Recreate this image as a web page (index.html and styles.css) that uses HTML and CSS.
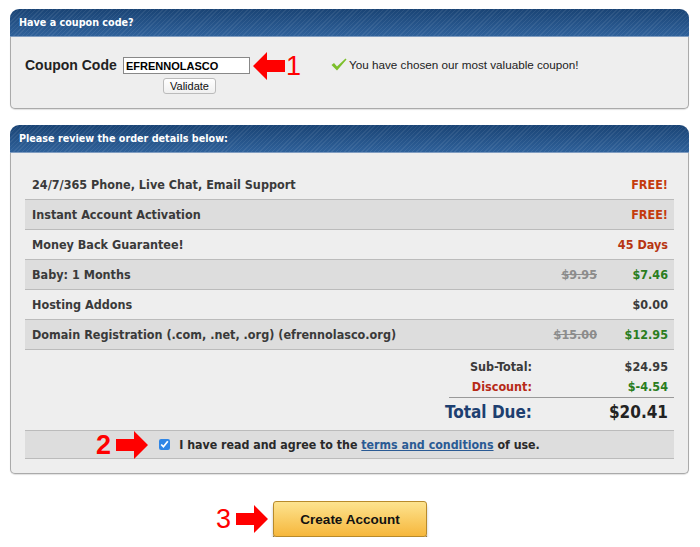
FILE: index.html
```html
<!DOCTYPE html>
<html lang="en">
<head>
    <meta charset="UTF-8">
    <title>Order review</title>
    <link rel="stylesheet" href="styles.css">
</head>
<body>
    <div class="page">
        <div class="panel">
            <div class="panel-head">Have a coupon code?</div>
            <div class="panel-body coupon-body">
                <label class="coupon-label" for="coupon">Coupon Code</label>
                <div class="coupon-field">
                    <input type="text" id="coupon" value="EFRENNOLASCO">
                    <button type="button" class="validate">Validate</button>
                </div>
                <span class="mark mark-left">
                    <svg width="32" height="28" viewBox="0 0 32 28"><path d="M0 14 L14 0 L14 8 L32 8 L32 20 L14 20 L14 28 Z" fill="#f00"/></svg>
                    <span class="mark-num">1</span>
                </span>
                <div class="coupon-msg">
                    <svg width="16" height="13" viewBox="0 0 16 13"><path d="M0.5 7 L3 5 L6 8.5 L14.5 0.5 L15.5 1.5 L6 12.5 Z" fill="#7cbf2a"/></svg>
                    You have chosen our most valuable coupon!
                </div>
            </div>
        </div>

        <div class="panel">
            <div class="panel-head">Please review the order details below:</div>
            <div class="panel-body order-body">
                <div class="row">
                    <span class="name">24/7/365 Phone, Live Chat, Email Support</span>
                    <span class="price free">FREE!</span>
                </div>
                <div class="row alt">
                    <span class="name">Instant Account Activation</span>
                    <span class="price free">FREE!</span>
                </div>
                <div class="row">
                    <span class="name">Money Back Guarantee!</span>
                    <span class="price days">45 Days</span>
                </div>
                <div class="row alt">
                    <span class="name">Baby: 1 Months</span>
                    <span class="old">$9.95</span>
                    <span class="price green">$7.46</span>
                </div>
                <div class="row">
                    <span class="name">Hosting Addons</span>
                    <span class="price">$0.00</span>
                </div>
                <div class="row alt">
                    <span class="name">Domain Registration (.com, .net, .org) (efrennolasco.org)</span>
                    <span class="old">$15.00</span>
                    <span class="price green">$12.95</span>
                </div>

                <div class="totals">
                    <div class="sum-line">
                        <span class="sum-label">Sub-Total:</span>
                        <span class="sum-value">$24.95</span>
                    </div>
                    <div class="sum-line">
                        <span class="sum-label discount">Discount:</span>
                        <span class="sum-value green">$-4.54</span>
                    </div>
                    <div class="sum-line total">
                        <span class="sum-label">Total Due:</span>
                        <span class="sum-value">$20.41</span>
                    </div>
                </div>

                <div class="agree">
                    <span class="mark mark-right mark-2">
                        <span class="mark-num">2</span>
                        <svg width="32" height="28" viewBox="0 0 32 28"><path d="M32 14 L18 0 L18 8 L0 8 L0 20 L18 20 L18 28 Z" fill="#f00"/></svg>
                    </span>
                    <input type="checkbox" id="agree" checked>
                    <label for="agree">I have read and agree to the <a href="#">terms and conditions</a> of use.</label>
                </div>
            </div>
        </div>

        <div class="submit">
            <div class="submit-inner">
                <span class="mark mark-right mark-3">
                    <span class="mark-num">3</span>
                    <svg width="32" height="28" viewBox="0 0 32 28"><path d="M32 14 L18 0 L18 8 L0 8 L0 20 L18 20 L18 28 Z" fill="#f00"/></svg>
                </span>
                <button type="button" class="create">Create Account</button>
            </div>
        </div>
    </div>
</body>
</html>
```

FILE: styles.css
```css
body {
    margin: 0;
    background: #fff;
    font-family: "Liberation Sans", Arial, sans-serif;
    color: #222;
}

.page {
    padding: 9px 11px 0 10px;
}

.panel + .panel {
    margin-top: 16px;
}

.panel-head {
    height: 28px;
    line-height: 27px;
    padding-left: 9px;
    border-radius: 9px 9px 0 0;
    color: #fff;
    font-family: "DejaVu Sans Condensed", "DejaVu Sans", sans-serif;
    font-weight: bold;
    font-size: 10.7px;
    background:
        repeating-linear-gradient(135deg, rgba(255,255,255,0.07) 0 1px, transparent 1px 3px),
        linear-gradient(#1a4475, #2f619a);
    border-bottom: 1px solid #7f9cc0;
    box-sizing: border-box;
}

.panel-body {
    background: #eee;
    border: 1px solid #aaa;
    border-top: none;
    border-radius: 0 0 5px 5px;
    box-shadow: 0 1px 1px rgba(0,0,0,0.12);
}

/* coupon */
.coupon-body {
    height: 72px;
    display: flex;
    align-items: flex-start;
    padding: 20px 0 0 14px;
    box-sizing: border-box;
}

.coupon-label {
    font-weight: bold;
    font-size: 14px;
    color: #222;
    line-height: 17px;
    width: 98px;
}

.coupon-field {
    display: flex;
    flex-direction: column;
    align-items: center;
}

.coupon-field input {
    width: 127px;
    height: 17px;
    box-sizing: border-box;
    border: 1px solid #888;
    padding: 0 2px;
    font-family: "Liberation Sans", Arial, sans-serif;
    font-weight: bold;
    font-size: 11px;
    color: #000;
    background: #fff;
}

.validate {
    margin: 4px 0 0 6px;
    height: 16px;
    padding: 0 6px;
    font-family: "Liberation Sans", Arial, sans-serif;
    font-size: 11px;
    background: linear-gradient(#fff, #f0f0f0);
    border: 1px solid #bbb;
    border-radius: 3px;
    color: #111;
    line-height: 14px;
}

.mark {
    display: flex;
    align-items: center;
    color: #f00;
    font-family: "Liberation Sans", Arial, sans-serif;
    font-size: 27px;
    line-height: 28px;
}

.mark-left {
    margin: -5px 0 0 3px;
    gap: 1px;
}

.mark-right {
    position: absolute;
    gap: 5px;
}

.coupon-msg {
    display: flex;
    align-items: flex-start;
    gap: 2px;
    margin: 1px 0 0 30px;
    font-size: 11.7px;
    color: #222;
}

/* order */
.order-body {
    padding: 17px 14px 14px 14px;
}

.row {
    display: flex;
    align-items: center;
    height: 29px;
    padding: 0 6px 0 7px;
    border-bottom: 1px solid #bbb;
    font-family: "DejaVu Sans Condensed", "DejaVu Sans", sans-serif;
    font-weight: bold;
    font-size: 12.5px;
    color: #3a3a3a;
}

.row.alt {
    background: #ddd;
}

.name {
    flex: 1;
}

.old {
    color: #8c8c8c;
    text-decoration: line-through;
}

.price {
    width: 71px;
    text-align: right;
}

.free {
    color: #c43a0c;
}

.days {
    color: #b73512;
}

.green {
    color: #2a7d1e;
}

.totals {
    width: 225px;
    margin: 6px 0 0 auto;
    font-family: "DejaVu Sans Condensed", "DejaVu Sans", sans-serif;
    font-weight: bold;
    font-size: 12.5px;
    color: #3a3a3a;
}

.sum-line {
    display: flex;
    height: 20px;
    align-items: center;
}

.sum-label {
    width: 83px;
    display: flex;
    justify-content: flex-end;
    white-space: nowrap;
}

.sum-value {
    flex: 1;
    text-align: right;
    padding-right: 6px;
}

.discount {
    color: #b72a17;
}

.sum-line.total {
    height: 27px;
    margin-top: 1px;
    border-top: 1px solid #999;
    font-size: 17px;
}

.sum-line.total .sum-label {
    color: #1d3f70;
}

.sum-line.total .sum-value {
    color: #222;
}

.agree {
    position: relative;
    display: flex;
    align-items: center;
    justify-content: center;
    height: 27px;
    margin-top: 5px;
    background: #ddd;
    border-top: 1px solid #bbb;
    border-bottom: 1px solid #bbb;
    font-family: "DejaVu Sans Condensed", "DejaVu Sans", sans-serif;
    font-weight: bold;
    font-size: 12.3px;
    color: #2a2a2a;
}

.agree input {
    width: 11px;
    height: 11px;
    margin: 0 9px 0 0;
    accent-color: #2f86e6;
}

.agree a {
    color: #2a5a94;
    text-decoration: underline;
}

.mark-2 {
    left: 71px;
    top: 0;
}

/* submit */
.submit {
    display: flex;
    justify-content: center;
    margin-top: 27px;
    padding-left: 1px;
}

.submit-inner {
    position: relative;
}

.mark-3 {
    left: -57px;
    top: 4px;
}

.create {
    width: 154px;
    height: 36px;
    border: 1px solid #b88a2b;
    border-radius: 3px;
    background: linear-gradient(#fde38f, #f6b73c);
    box-shadow: 0 3px 0 #8b6a2c, 0 4px 3px rgba(0,0,0,0.25);
    font-family: "Liberation Sans", Arial, sans-serif;
    font-weight: bold;
    font-size: 13.5px;
    color: #111;
}
```
